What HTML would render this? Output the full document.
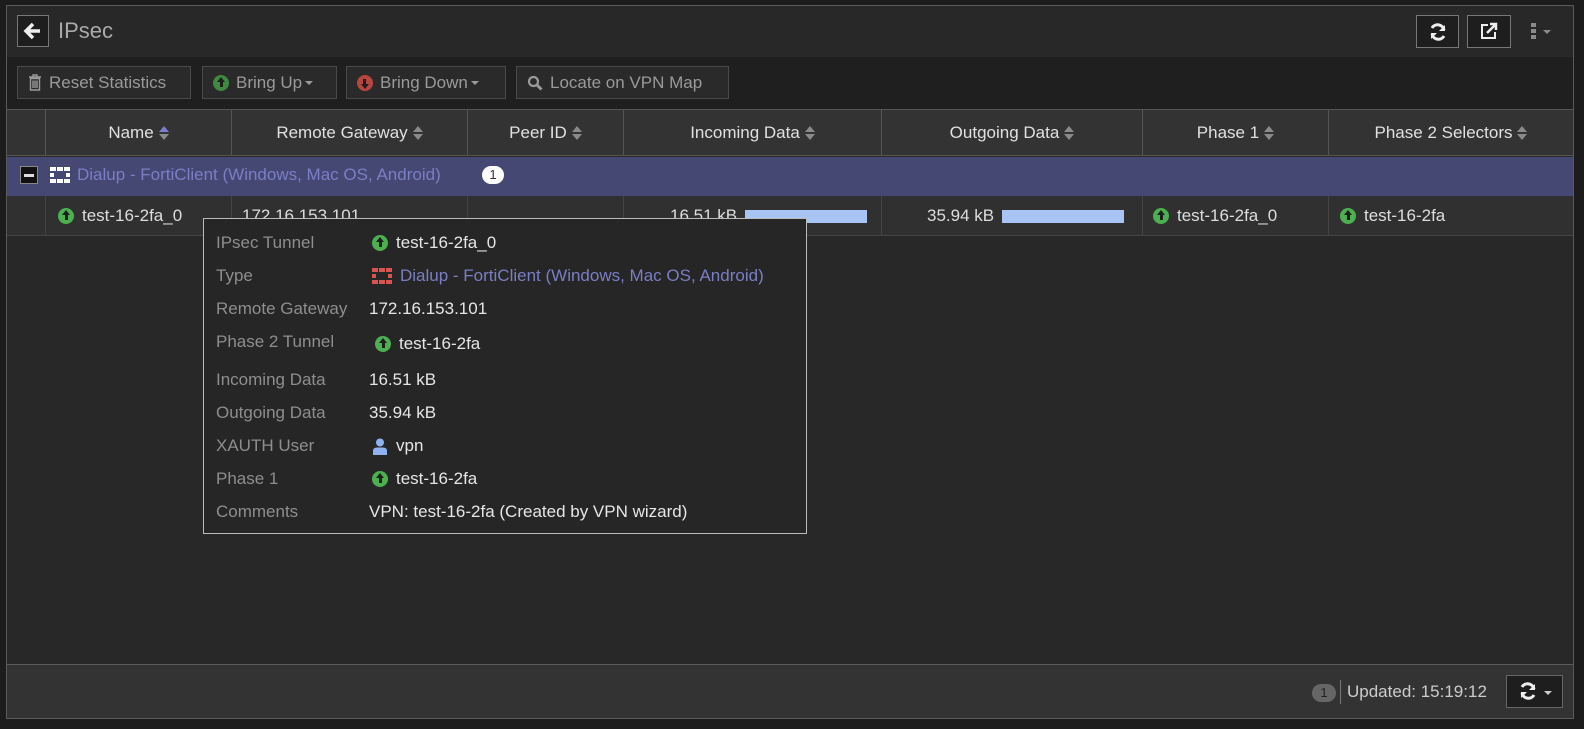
<!DOCTYPE html>
<html><head><meta charset="utf-8"><style>
*{box-sizing:border-box;margin:0;padding:0}
body{width:1584px;height:729px;background:#1c1c1c;font-family:"Liberation Sans",sans-serif;color:#d8d8d8;font-size:16px;position:relative;overflow:hidden}
.a{position:absolute}
.panel{left:6px;top:5px;width:1568px;height:714px;border:1px solid #5a5a5a;background:#282828}
.btn{position:absolute;border:1px solid #4a4a4a;background:#2a2a2a;color:#9a9a9a;height:33px;top:66px;display:flex;align-items:center;padding:0 10px;font-size:17px;gap:7px}
.th{position:absolute;top:110px;height:46px;display:flex;align-items:center;justify-content:center;border-left:1px solid #555;color:#e0e0e0;font-size:17px;gap:5px}
.sort{display:inline-block;width:10px;height:14px;position:relative}
.sort:before{content:"";position:absolute;left:0;top:0;border-left:5px solid transparent;border-right:5px solid transparent;border-bottom:6px solid #8a8a8a}
.sort:after{content:"";position:absolute;left:0;top:8px;border-left:5px solid transparent;border-right:5px solid transparent;border-top:6px solid #8a8a8a}
.sort.b:before{border-bottom-color:#7b7fd0}
.up{display:inline-block;width:16px;height:16px;border-radius:50%;background:#4caf50;position:relative;vertical-align:middle}
.up:before{content:"";position:absolute;left:4px;top:2px;border-left:4px solid transparent;border-right:4px solid transparent;border-bottom:5px solid #1e1e1e}
.up:after{content:"";position:absolute;left:6.5px;top:6px;width:3px;height:6px;background:#1e1e1e}
.td{position:absolute;top:196px;height:40px;display:flex;align-items:center;border-left:1px solid #444;font-size:17px;color:#ddd;gap:8px}
.tl{position:absolute;left:216px;color:#8e8e8e;font-size:17px}
.tv{position:absolute;left:369px;color:#e6e6e6;font-size:17px;display:flex;align-items:center;gap:8px}
.caret{display:inline-block;border-left:4px solid transparent;border-right:4px solid transparent;border-top:4px solid #9a9a9a;margin-left:-4px}
</style></head><body>
<div class="a panel"></div>
<div class="a" style="left:7px;top:6px;width:1566px;height:51px;background:#282828"></div>
<div class="a" style="left:17px;top:15px;width:32px;height:32px;border:1px solid #777;background:#1e1e1e"></div>
<svg class="a" style="left:23px;top:21px" width="20" height="20" viewBox="0 0 20 20"><path d="M10 3 L3 10 L10 17 M3 10 H17" stroke="#eee" stroke-width="3.5" fill="none"/></svg>
<div class="a" style="left:58px;top:18px;font-size:22px;color:#aaa">IPsec</div>
<div class="a" style="left:1416px;top:15px;width:43px;height:33px;border:1px solid #777;background:#1e1e1e"></div>
<svg class="a" style="left:1428px;top:22px" width="20" height="20" viewBox="0 0 20 20"><path d="M16 8 A6.5 6.5 0 0 0 4 6 M4 12 A6.5 6.5 0 0 0 16 14" stroke="#eee" stroke-width="3" fill="none"/><path d="M17 3 V9 H11Z M3 17 V11 H9Z" fill="#eee"/></svg>
<div class="a" style="left:1467px;top:15px;width:44px;height:33px;border:1px solid #777;background:#1e1e1e"></div>
<svg class="a" style="left:1479px;top:21px" width="20" height="20" viewBox="0 0 20 20"><path d="M9 4 H3 V17 H16 V11" stroke="#eee" stroke-width="2" fill="none"/><path d="M8 12 L16 4 M11 3 H17 V9" stroke="#eee" stroke-width="2.5" fill="none"/></svg>
<div class="a" style="left:1531px;top:23px;width:5px;height:16px;background:repeating-linear-gradient(#8a8a8a 0 4px,transparent 4px 6px)"></div>
<div class="a" style="left:1543px;top:30px;border-left:4px solid transparent;border-right:4px solid transparent;border-top:4px solid #8a8a8a"></div>
<div class="a" style="left:7px;top:57px;width:1566px;height:53px;background:#1f1f1f;border-bottom:1px solid #555"></div>
<div class="btn" style="left:17px;width:174px"><svg width="14" height="17" viewBox="0 0 14 17"><path d="M1 3H13M5 3V1H9V3M2.5 4.5H11.5V16H2.5Z M5 6.5V14M7 6.5V14M9 6.5V14" stroke="#999" stroke-width="1.4" fill="none"/></svg>Reset Statistics</div>
<div class="btn" style="left:202px;width:135px"><span class="up" style="background:#3d8a40"></span>Bring Up<span class="caret"></span></div>
<div class="btn" style="left:346px;width:160px"><span class="up" style="background:#b8463e;transform:rotate(180deg)"></span>Bring Down<span class="caret"></span></div>
<div class="btn" style="left:516px;width:213px"><svg width="16" height="16" viewBox="0 0 16 16"><circle cx="6.5" cy="6.5" r="4.5" stroke="#999" stroke-width="2.2" fill="none"/><path d="M10 10 L14.5 14.5" stroke="#999" stroke-width="3"/></svg>Locate on VPN Map</div>
<div class="a" style="left:7px;top:110px;width:1566px;height:46px;background:#333;border-bottom:1px solid #555"></div>
<div class="th" style="left:45px;width:186px">Name<span class="sort b"></span></div>
<div class="th" style="left:231px;width:236px">Remote Gateway<span class="sort"></span></div>
<div class="th" style="left:467px;width:156px">Peer ID<span class="sort"></span></div>
<div class="th" style="left:623px;width:258px">Incoming Data<span class="sort"></span></div>
<div class="th" style="left:881px;width:261px">Outgoing Data<span class="sort"></span></div>
<div class="th" style="left:1142px;width:186px">Phase 1<span class="sort"></span></div>
<div class="th" style="left:1328px;width:245px">Phase 2 Selectors<span class="sort"></span></div>
<div class="a" style="left:7px;top:157px;width:1566px;height:39px;background:#464874"></div>
<div class="a" style="left:20px;top:166px;width:18px;height:18px;background:#111;border:1px solid #888"><div style="margin:7px 3px;height:3px;background:#ddd"></div></div>
<svg class="a" style="left:50px;top:167px" width="20" height="16" viewBox="0 0 20 16"><path d="M0 0H6V4H0ZM7 0H13V4H7ZM14 0H20V4H14ZM0 6H4V10H0ZM16 6H20V10H16ZM0 12H6V16H0ZM7 12H13V16H7ZM14 12H20V16H14Z" fill="#fff"/></svg>
<div class="a" style="left:77px;top:165px;font-size:17px;color:#7a7ec4">Dialup - FortiClient (Windows, Mac OS, Android)</div>
<div class="a" style="left:482px;top:166px;width:22px;height:18px;border-radius:9px;background:#fff;color:#333;font-size:13px;text-align:center;line-height:18px">1</div>
<div class="a" style="left:7px;top:196px;width:1566px;height:40px;background:#303030;border-bottom:1px solid #444"></div>
<div class="td" style="left:45px;width:186px;padding-left:12px"><span class="up"></span>test-16-2fa_0</div>
<div class="td" style="left:231px;width:236px;padding-left:10px">172.16.153.101</div>
<div class="td" style="left:467px;width:156px"></div>
<div class="td" style="left:623px;width:258px;padding-left:46px">16.51 kB<span style="width:122px;height:13px;background:#a8c4f4;display:inline-block"></span></div>
<div class="td" style="left:881px;width:261px;padding-left:45px">35.94 kB<span style="width:122px;height:13px;background:#a8c4f4;display:inline-block"></span></div>
<div class="td" style="left:1142px;width:186px;padding-left:10px"><span class="up"></span>test-16-2fa_0</div>
<div class="td" style="left:1328px;width:245px;padding-left:11px"><span class="up"></span>test-16-2fa</div>
<div class="a" style="left:7px;top:664px;width:1566px;height:54px;background:#333;border-top:1px solid #5a5a5a"></div>
<div class="a" style="left:1312px;top:684px;width:24px;height:18px;border-radius:9px;background:#666;color:#222;font-size:13px;text-align:center;line-height:18px">1</div>
<div class="a" style="left:1340px;top:680px;width:1px;height:24px;background:#777"></div>
<div class="a" style="left:1347px;top:682px;font-size:17px;color:#ccc">Updated: 15:19:12</div>
<div class="a" style="left:1506px;top:675px;width:57px;height:33px;border:1px solid #666;background:#1e1e1e"></div>
<svg class="a" style="left:1518px;top:681px" width="20" height="20" viewBox="0 0 20 20"><path d="M16 8 A6.5 6.5 0 0 0 4 6 M4 12 A6.5 6.5 0 0 0 16 14" stroke="#eee" stroke-width="3" fill="none"/><path d="M17 3 V9 H11Z M3 17 V11 H9Z" fill="#eee"/></svg>
<div class="a" style="left:1544px;top:691px;border-left:4px solid transparent;border-right:4px solid transparent;border-top:4px solid #ccc"></div>
<div class="a" style="left:203px;top:218px;width:604px;height:316px;background:#262626;border:1px solid #bbb"></div>
<div class="tl" style="top:233px">IPsec Tunnel</div><div class="tv" style="top:233px;left:372px"><span class="up"></span>test-16-2fa_0</div>
<div class="tl" style="top:266px">Type</div><div class="tv" style="top:266px;left:372px;color:#7a7ec4"><svg width="20" height="16" viewBox="0 0 20 16"><path d="M0 0H6V4H0ZM7 0H13V4H7ZM14 0H20V4H14ZM0 6H4V10H0ZM16 6H20V10H16ZM0 12H6V16H0ZM7 12H13V16H7ZM14 12H20V16H14Z" fill="#d9534f"/></svg>Dialup - FortiClient (Windows, Mac OS, Android)</div>
<div class="tl" style="top:299px">Remote Gateway</div><div class="tv" style="top:299px">172.16.153.101</div>
<div class="tl" style="top:332px">Phase 2 Tunnel</div><div class="tv" style="top:334px;left:375px"><span class="up"></span>test-16-2fa</div>
<div class="tl" style="top:370px">Incoming Data</div><div class="tv" style="top:370px">16.51 kB</div>
<div class="tl" style="top:403px">Outgoing Data</div><div class="tv" style="top:403px">35.94 kB</div>
<div class="tl" style="top:436px">XAUTH User</div><div class="tv" style="top:436px;left:372px"><svg width="16" height="17" viewBox="0 0 16 17"><circle cx="8" cy="4.5" r="4" fill="#8fb3f0"/><path d="M1 17 V13 Q1 9.5 5 9.5 H11 Q15 9.5 15 13 V17Z" fill="#8fb3f0"/></svg>vpn</div>
<div class="tl" style="top:469px">Phase 1</div><div class="tv" style="top:469px;left:372px"><span class="up"></span>test-16-2fa</div>
<div class="tl" style="top:502px">Comments</div><div class="tv" style="top:502px">VPN: test-16-2fa (Created by VPN wizard)</div>
</body></html>
